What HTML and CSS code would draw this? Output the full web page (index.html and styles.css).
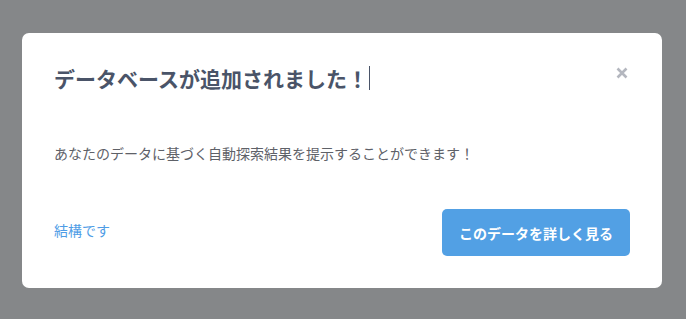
FILE: index.html
```html
<!DOCTYPE html>
<html lang="ja">
<head>
<meta charset="utf-8">
<link rel="stylesheet" href="styles.css">
</head>
<body>
<div class="modal">
  <div class="modal-header">
    <h2 class="title">データベースが追加されました！<span class="caret"></span></h2>
    <button class="close" aria-label="閉じる">
      <svg width="12" height="12" viewBox="0 0 12 12"><path d="M1.5 1.5L10.5 10.5M10.5 1.5L1.5 10.5" stroke="#b4b7bf" stroke-width="2.6" stroke-linecap="butt"/></svg>
    </button>
  </div>
  <p class="message">あなたのデータに基づく自動探索結果を提示することができます！</p>
  <div class="modal-footer">
    <a class="dismiss" href="#">結構です</a>
    <button class="primary">このデータを詳しく見る</button>
  </div>
</div>
</body>
</html>
```
FILE: styles.css
```css
html, body {
  margin: 0;
  padding: 0;
  background: #858789;
  font-family: "Noto Sans CJK JP", "Noto Sans", sans-serif;
}
.modal {
  box-sizing: border-box;
  width: 640px;
  height: 255px;
  margin: 33px 0 0 22px;
  background: #ffffff;
  border-radius: 7px;
  padding: 33px 32px 32px 32px;
  display: flex;
  flex-direction: column;
}
.modal-header {
  display: flex;
  justify-content: space-between;
  align-items: flex-start;
}
.title {
  margin: 0;
  font-size: 21px;
  line-height: 24px;
  font-weight: 700;
  color: #4a5468;
  display: flex;
  align-items: center;
}
.caret {
  display: inline-block;
  width: 0;
  height: 24px;
  border-left: 1px solid #4a5468;
  margin-left: 1px;
}
.close {
  border: 0;
  background: none;
  padding: 0;
  margin: 1px 2px 0 0;
  width: 12px;
  height: 12px;
  display: flex;
}
.message {
  margin: 53px 0 0 0;
  font-size: 14px;
  line-height: 20px;
  color: #5e6168;
}
.modal-footer {
  margin-top: auto;
  display: flex;
  justify-content: space-between;
  align-items: center;
}
.dismiss {
  font-size: 14px;
  color: #4f9de6;
  text-decoration: none;
  margin-bottom: 5px;
}
.primary {
  height: 47px;
  padding: 0 17px;
  margin-right: 0;
  border: 0;
  border-radius: 5px;
  background: #52a0e4;
  color: #ffffff;
  font-family: "Noto Sans CJK JP", "Noto Sans", sans-serif;
  font-size: 14px;
  font-weight: 700;
}
```
